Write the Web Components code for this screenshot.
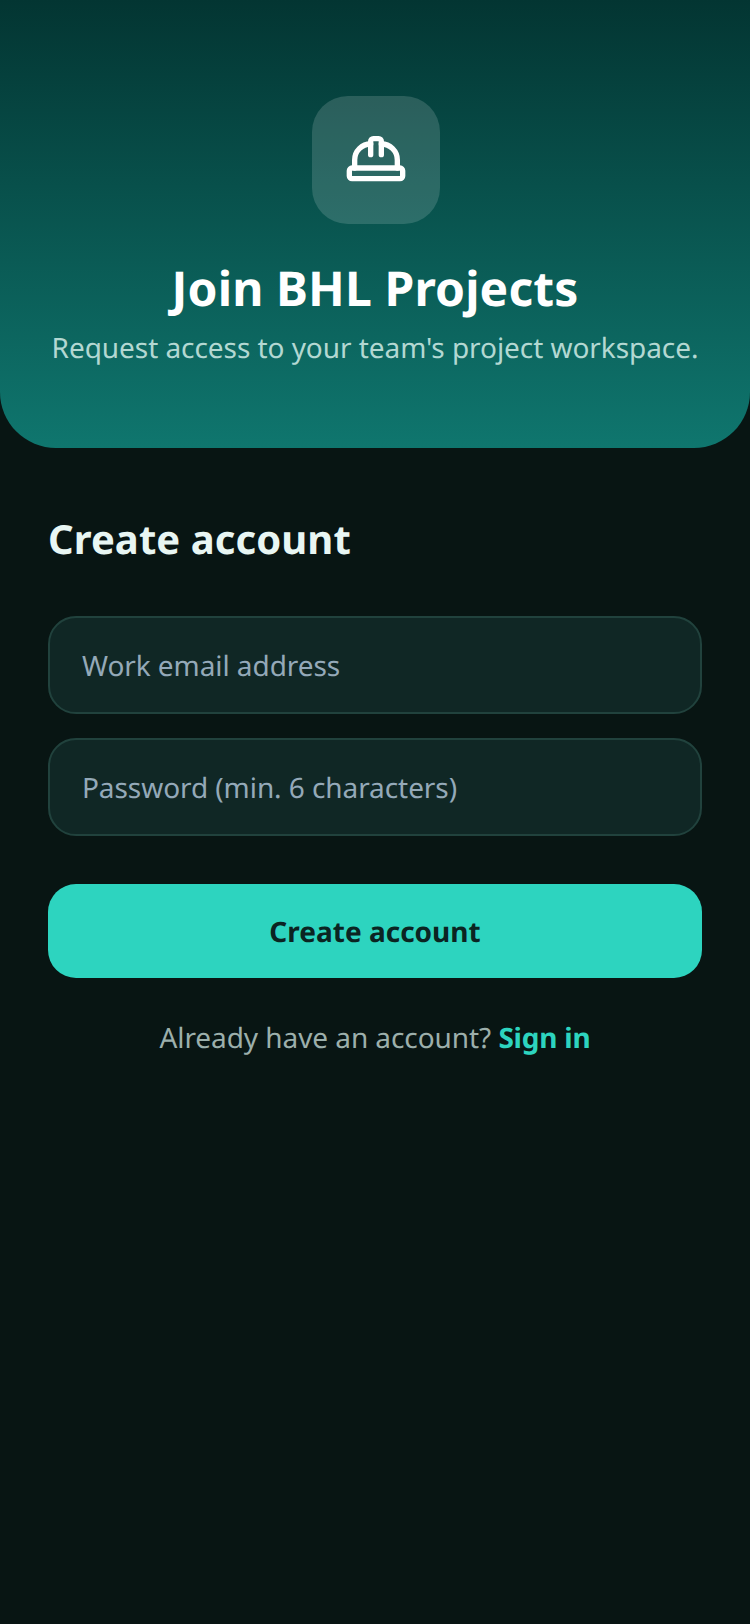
<!DOCTYPE html>
<html>
<head>
<meta charset="utf-8">
<title>Join BHL Projects</title>
<style>
  html, body { margin: 0; padding: 0; background: #081513; }
  body { font-family: "Noto Sans", "Open Sans", sans-serif; text-rendering: geometricPrecision; width: 750px; height: 1624px; overflow: hidden; }
</style>
</head>
<body>
<signup-screen></signup-screen>

<script>
class HeroHeader extends HTMLElement {
  constructor() {
    super();
    this.attachShadow({ mode: 'open' });
  }
  renderTemplate() {
    return `
    <style>
      :host {
        display: flex;
        flex-direction: column;
        align-items: center;
        height: 448px;
        box-sizing: border-box;
        padding-top: 96px;
        background: linear-gradient(180deg, #033532 0%, #0f766e 100%);
        border-radius: 0 0 56px 56px;
      }
      .badge {
        width: 128px;
        height: 128px;
        margin-left: 2px;
        border-radius: 36px;
        background: rgba(255,255,255,0.15);
        display: flex;
        align-items: center;
        justify-content: center;
      }
      h1 {
        margin: 33px 0 0;
        font-size: 48px;
        line-height: 64px;
        font-weight: 700;
        letter-spacing: 0.12px;
        color: #fff;
      }
      p {
        margin: 7px 0 0;
        font-size: 28px;
        line-height: 40px;
        letter-spacing: -0.06px;
        color: #b3d8d2;
      }
    </style>
    <div class="badge">
      <svg width="64" height="64" viewBox="0 0 24 24" fill="none" stroke="#fff" stroke-width="2" stroke-linecap="round" stroke-linejoin="round">
        <path d="M10 10V5a1 1 0 0 1 1-1h2a1 1 0 0 1 1 1v5"/>
        <path d="M14 6a6 6 0 0 1 6 6v3"/>
        <path d="M4 15v-3a6 6 0 0 1 6-6"/>
        <rect x="2" y="15" width="20" height="4" rx="1"/>
      </svg>
    </div>
    <h1>Join BHL Projects</h1>
    <p>Request access to your team's project workspace.</p>
    `;
  }
  connectedCallback() {
    this.shadowRoot.innerHTML = this.renderTemplate();
  }
}

class TextField extends HTMLElement {
  constructor() {
    super();
    this.attachShadow({ mode: 'open' });
  }
  renderTemplate() {
    return `
    <style>
      :host {
        display: flex;
        align-items: center;
        height: 98px;
        box-sizing: border-box;
        padding: 2px 32px 0;
        background: #102725;
        border: 2px solid #21423d;
        border-radius: 28px;
        font-size: 28px;
        letter-spacing: -0.07px;
        color: #94a9b8;
      }
    </style>
    <slot></slot>
    `;
  }
  connectedCallback() {
    this.shadowRoot.innerHTML = this.renderTemplate();
  }
}

class PrimaryButton extends HTMLElement {
  constructor() {
    super();
    this.attachShadow({ mode: 'open' });
  }
  renderTemplate() {
    return `
    <style>
      :host {
        display: flex;
        align-items: center;
        justify-content: center;
        height: 94px;
        box-sizing: border-box;
        padding-top: 2px;
        background: #2dd4bf;
        border-radius: 28px;
        font-size: 28px;
        font-weight: 700;
        color: #0b2422;
      }
    </style>
    <slot></slot>
    `;
  }
  connectedCallback() {
    this.shadowRoot.innerHTML = this.renderTemplate();
  }
}

class SignupForm extends HTMLElement {
  constructor() {
    super();
    this.attachShadow({ mode: 'open' });
  }
  renderTemplate() {
    return `
    <style>
      :host {
        display: flex;
        flex-direction: column;
        padding: 47px 48px 0;
      }
      h2 {
        margin: 0 0 33px;
        font-size: 40px;
        line-height: 88px;
        font-weight: 700;
        letter-spacing: 0.07px;
        color: #e8f6f3;
      }
      .fields {
        display: flex;
        flex-direction: column;
        gap: 24px;
      }
      primary-button { margin-top: 48px; }
      .foot {
        margin-top: 40px;
        text-align: center;
        font-size: 28px;
        line-height: 40px;
        letter-spacing: -0.07px;
        color: #9cafab;
      }
      .foot b { color: #2dd4bf; font-weight: 700; letter-spacing: -0.2px; }
    </style>
    <h2>Create account</h2>
    <div class="fields">
      <text-field>Work email address</text-field>
      <text-field>Password (min. 6 characters)</text-field>
    </div>
    <primary-button>Create account</primary-button>
    <div class="foot">Already have an account? <b>Sign in</b></div>
    `;
  }
  connectedCallback() {
    this.shadowRoot.innerHTML = this.renderTemplate();
  }
}

class SignupScreen extends HTMLElement {
  constructor() {
    super();
    this.attachShadow({ mode: 'open' });
  }
  renderTemplate() {
    return `
    <style>
      :host {
        display: block;
        width: 750px;
        height: 1624px;
        background: #081513;
      }
    </style>
    <hero-header></hero-header>
    <signup-form></signup-form>
    `;
  }
  connectedCallback() {
    this.shadowRoot.innerHTML = this.renderTemplate();
  }
}

customElements.define('hero-header', HeroHeader);
customElements.define('text-field', TextField);
customElements.define('primary-button', PrimaryButton);
customElements.define('signup-form', SignupForm);
customElements.define('signup-screen', SignupScreen);
</script>
</body>
</html>
